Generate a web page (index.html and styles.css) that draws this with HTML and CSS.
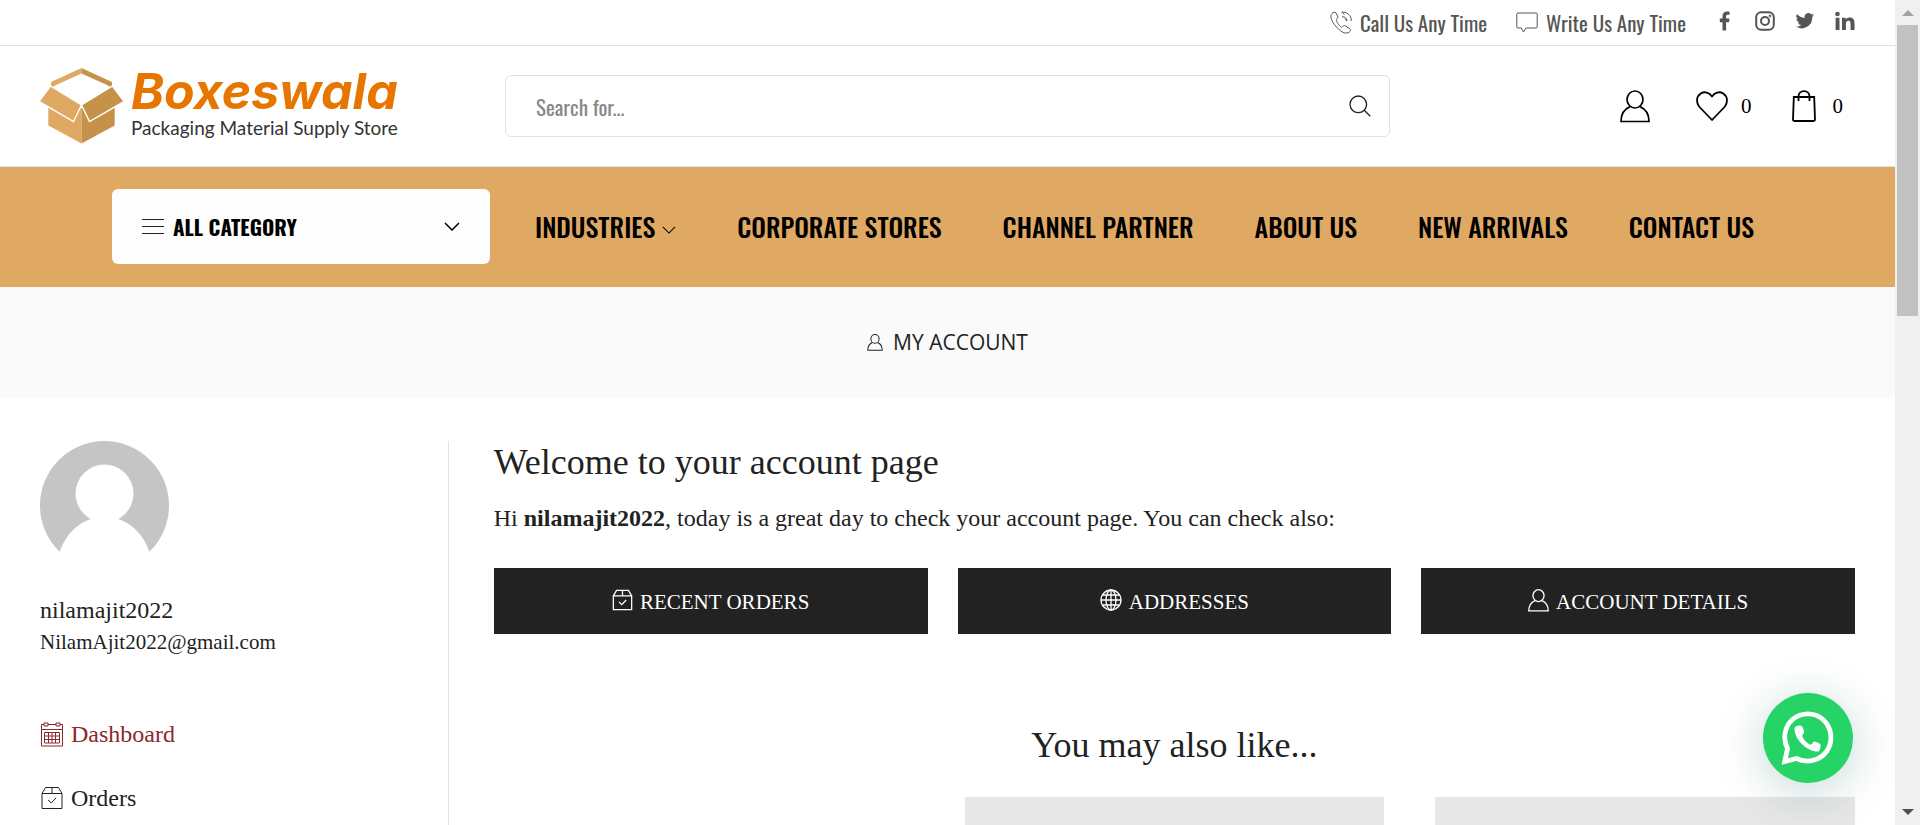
FILE: index.html
```html
<!DOCTYPE html>
<html lang="en">
<head>
<meta charset="utf-8">
<title>My account – Boxeswala</title>
<meta name="viewport" content="width=device-width, initial-scale=1">
<link rel="stylesheet" href="styles.css">
</head>
<body>
<svg class="sprite" aria-hidden="true">
  <symbol id="i-user" viewBox="0 0 30 33"><g fill="none" stroke="currentColor"><ellipse cx="15" cy="9.500" rx="8" ry="8.500"/><path d="M10 16.600C4.500 19 1 24.500 1 31.500H29C29 24.500 25.500 19 20 16.600"/></g></symbol>
  <symbol id="i-box" viewBox="0 0 22 24"><g fill="none" stroke="currentColor"><path d="M1 7.500H21V22.500H1ZM1 7.500L4.500 1.500H17.500L21 7.500M11 1.500V7.500M7.200 14L10.200 17L15 12"/></g></symbol>
  <symbol id="i-chevron" viewBox="0 0 16 9"><path d="M1 1L8 8L15 1" fill="none" stroke="currentColor"/></symbol>
</svg>
<div class="window">
  <div class="page">
    <div class="topbar">
      <a class="contact" href="#call"><svg class="ico-phone" viewBox="0 0 22 23" fill="none" stroke="currentColor"><path d="M2 2.500C3 1 5 .800 6 2L7.700 5.200C8.300 6.500 7.500 7.500 6.300 8.500C6 10 9 15 11.500 16.300C13 15 14.300 14.200 15.500 15L19.800 17.800C21 18.800 20.600 20 19.300 21C17.500 22.300 15.200 22.500 12.800 21.200C7.500 18.300 2.600 12.200 1.200 7.500C.600 5.400 1 3.800 2 2.500ZM11.500 1.200C16.500 .400 21.800 4.500 21.200 10M12 5.800C14.500 5.300 17 7.200 17 9.800M12 1.200L14.500 3.400M17 9.800L14.700 8"/></svg><span>Call Us Any Time</span></a>
      <a class="contact" href="#write"><svg class="ico-chat" viewBox="0 0 22 21" fill="none" stroke="currentColor"><path d="M2 1H20Q21.200 1 21.200 2.200V14.800Q21.200 16 20 16H10L7.500 20L5.200 16H2Q.800 16 .800 14.800V2.200Q.800 1 2 1Z"/></svg><span>Write Us Any Time</span></a>
      <nav class="social" aria-label="Social">
        <a href="#facebook" aria-label="Facebook"><svg width="20" height="20" viewBox="0 0 20 20" fill="currentColor"><path d="M7.500 19.500V11.200H4.800V7.600H7.500V5.100C7.500 2 9.300.500 12 .500C13.200.500 14.300.600 14.600.700V3.800H12.800C11.400 3.800 11.100 4.500 11.100 5.500V7.600H14.500L14 11.200H11.100V19.500Z"/></svg></a>
        <a href="#instagram" aria-label="Instagram"><svg width="20" height="20" viewBox="0 0 20 20" fill="none" stroke="currentColor" stroke-width="2"><rect x="1.200" y="1.200" width="17.600" height="17.600" rx="5"/><circle cx="10" cy="10" r="4"/><circle cx="15" cy="5" r=".400"/></svg></a>
        <a href="#twitter" aria-label="Twitter"><svg width="20" height="20" viewBox="0 0 24 24" fill="currentColor"><path d="M23 4.900c-.800.400-1.700.600-2.600.700.900-.600 1.600-1.500 2-2.500-.900.500-1.900.900-2.900 1.100A4.500 4.500 0 0 0 11.700 8.300C7.900 8.100 4.600 6.300 2.400 3.600a4.500 4.500 0 0 0 1.400 6.100c-.700 0-1.400-.200-2-.600a4.500 4.500 0 0 0 3.600 4.500c-.700.200-1.400.200-2 .100a4.500 4.500 0 0 0 4.200 3.100A9.100 9.100 0 0 1 1 18.700 12.800 12.800 0 0 0 20.700 7.200c.900-.600 1.700-1.400 2.300-2.300z"/></svg></a>
        <a href="#linkedin" aria-label="LinkedIn"><svg width="20" height="20" viewBox="0 0 20 20" fill="currentColor"><circle cx="2.500" cy="3" r="2.300"/><path d="M.600 6.800H4.500V19H.600ZM7 6.800H10.700V8.500C11.400 7.300 12.800 6.500 14.600 6.500C18.400 6.500 19.500 8.800 19.500 12.300V19H15.600V13C15.600 11.300 15.400 9.800 13.500 9.800C11.500 9.800 10.900 11.200 10.900 13V19H7Z"/></svg></a>
      </nav>
    </div>

    <header class="header">
      <a class="logo" href="#home">
        <svg class="logo-box" viewBox="0 0 83 76"><path fill="#e0a963" d="M8.300 34H41.500V75.500L8.300 57.500Z"/><path fill="#c6924a" d="M41.500 34H74.700V57.500L41.500 75.500Z"/><path fill="#fff" d="M41.500 5L73 19V26L41.500 40L10 26V19Z"/><path fill="#e0a963" d="M41.500 0V5.500L16 17L11 20V14Z"/><path fill="#c6924a" d="M41.500 0L72 14V20L67 17L41.500 5.500Z"/><path fill="#e0a963" stroke="#fff" stroke-width="1.400" d="M10.500 18L41.500 37L33.500 53.500L-1 33.500Z"/><path fill="#c6924a" stroke="#fff" stroke-width="1.400" d="M72.500 18L84 33.500L49.500 53.500L41.500 37Z"/></svg>
        <span class="logo-text"><span class="logo-name">Boxeswala</span><span class="logo-tag">Packaging Material Supply Store</span></span>
      </a>
      <form class="search" role="search">
        <input type="search" placeholder="Search for..." aria-label="Search for">
        <button type="button" aria-label="Search"><svg width="22" height="22" viewBox="0 0 22 22" fill="none" stroke="currentColor" stroke-width="1.300"><circle cx="9.300" cy="9.300" r="8.300"/><path d="M15.200 15.200L21.300 21.300"/></svg></button>
      </form>
      <div class="tools">
        <a href="#account" aria-label="Account"><svg class="ico-user" stroke-width="1.700"><use href="#i-user"/></svg></a>
        <a href="#wishlist" aria-label="Wishlist"><svg width="32" height="30" viewBox="0 0 32 30" fill="none" stroke="currentColor" stroke-width="1.800" stroke-linejoin="round"><path d="M16 5.500C13.500 1.500 8.500 0 4.800 2.500C.300 5.500 0 11 3 15.500L16 29L29 15.500C32 11 31.700 5.500 27.200 2.500C23.500 0 18.500 1.500 16 5.500Z"/></svg><span>0</span></a>
        <a href="#cart" aria-label="Cart"><svg width="28" height="32" viewBox="0 0 28 32" fill="none" stroke="currentColor" stroke-width="1.800"><path d="M1.800 7H22.200L23 29.500Q23 31 21.500 31H2.500Q1 31 1 29.500ZM6.500 11V6.500C6.500-.700 17.500-.700 17.500 6.500V11"/></svg><span>0</span></a>
      </div>
    </header>

    <div class="navbar">
      <button class="category" type="button"><svg width="22" height="16" viewBox="0 0 22 16" stroke="#222" stroke-width="1.200"><path d="M0 1.500H22M0 8.500H22M0 15.500H22"/></svg><span>ALL CATEGORY</span><svg class="ico-chevron" stroke-width="1.500"><use href="#i-chevron"/></svg></button>
      <nav class="menu" aria-label="Main">
        <a href="#industries">INDUSTRIES<svg class="ico-chevron-small" stroke-width="1.200"><use href="#i-chevron"/></svg></a>
        <a href="#corporate">CORPORATE STORES</a>
        <a href="#partner">CHANNEL PARTNER</a>
        <a href="#about">ABOUT US</a>
        <a href="#new">NEW ARRIVALS</a>
        <a href="#contact">CONTACT US</a>
      </nav>
    </div>

    <div class="banner"><svg class="ico-user-small" stroke-width="2"><use href="#i-user"/></svg><span>MY ACCOUNT</span></div>

    <div class="content">
      <aside class="sidebar">
        <svg class="avatar" viewBox="0 0 129 129" role="img" aria-label="Avatar"><circle cx="64.500" cy="64.500" r="64.500" fill="#c5c5c5"/><circle cx="64.500" cy="52.500" r="29" fill="#fff"/><path fill="#fff" d="M19.500 111C27 90 43 76 64.500 76S102 90 109.500 111L109 129H20Z"/></svg>
        <div class="user-name">nilamajit2022</div>
        <div class="user-mail">NilamAjit2022@gmail.com</div>
        <nav class="account-nav" aria-label="Account pages">
          <a class="active" href="#dashboard"><svg width="24" height="25" viewBox="0 0 24 25" fill="none" stroke="currentColor"><path d="M4 2.500H1.500V24H22.500V2.500H20M8 2.500H16M4 1H8V4H4ZM16 1H20V4H16ZM1.500 7.500H22.500M4.500 10.500H19.500V21H4.500ZM8.500 10.500V21M12 10.500V21M15.500 10.500V21M4.500 14H19.500M4.500 17.500H19.500"/></svg>Dashboard</a>
          <a href="#orders"><svg width="24" height="24"><use href="#i-box"/></svg>Orders</a>
        </nav>
      </aside>
      <main class="main">
        <h1>Welcome to your account page</h1>
        <p>Hi <strong>nilamajit2022</strong>, today is a great day to check your account page. You can check also:</p>
        <div class="actions">
          <a href="#orders"><svg width="21" height="22" stroke-width="1.400"><use href="#i-box"/></svg><span>RECENT ORDERS</span></a>
          <a href="#addresses"><svg width="22" height="22" viewBox="0 0 22 22" fill="none" stroke="currentColor" stroke-width="1.300"><circle cx="11" cy="11" r="10"/><ellipse cx="11" cy="11" rx="5" ry="10"/><path d="M11 1V21M1 11H21M2.800 6H19.200M2.800 16H19.200"/></svg><span>ADDRESSES</span></a>
          <a href="#details"><svg width="21" height="23" stroke-width="1.900"><use href="#i-user"/></svg><span>ACCOUNT DETAILS</span></a>
        </div>
        <h2>You may also like...</h2>
        <div class="products"><div></div><div class="product"></div><div class="product"></div></div>
      </main>
    </div>
  </div>
  <div class="scrollbar" aria-hidden="true"><span class="arrow up"></span><span class="thumb"></span><span class="arrow down"></span></div>
  <button class="whatsapp" type="button" aria-label="WhatsApp"><svg width="56" height="56" viewBox="0 0 56 56"><path fill="none" stroke="#fff" stroke-width="4.800" d="M7.500 38.500C2.500 28.500 4.500 16.500 12.500 9.500C21.500 2 34.500 2 43 9.500C52 17.500 53.500 31.500 46.500 41.500C39.500 51 27 53.500 16.500 48.500L4.700 51.500Z"/><path fill="#fff" d="M15 17C16.500 15.500 20.500 14.800 21.800 16C23 17.500 24.500 21 24 22.500C23.500 24 22 25 22.300 26.500C23.500 29.500 26.500 33 30.500 34.800C32 35 32.500 31.500 34.500 31.500C36.500 31.800 39.500 33.300 40.500 34.500C41 37 40 40.500 38.500 41.500C27.500 42 15.500 30.500 14.500 20C14.500 19 14.500 18 15 17Z"/></svg></button>
</div>
</body>
</html>
```
FILE: styles.css
```css
* { box-sizing: border-box; }
body {
  margin: 0;
  background: #fff;
  color: #222;
  font-family: "Liberation Serif", "Times New Roman", serif;
  font-size: 24px;
}
a { color: inherit; text-decoration: none; }
button, input { font: inherit; color: inherit; border: 0; background: none; padding: 0; }
svg { display: block; flex: none; }
.sprite { position: absolute; width: 0; height: 0; }
.window { display: flex; height: 100vh; overflow: hidden; }
.page { flex: 1; min-width: 0; overflow: hidden; }

.topbar, .menu, .category, .search input {
  font-family: Oswald, "Roboto Condensed", "Liberation Sans Narrow", sans-serif;
}
.topbar {
  display: flex;
  justify-content: flex-end;
  align-items: center;
  gap: 29px;
  height: 46px;
  padding: 0 40px;
  border-bottom: 1px solid #e1e1e1;
  color: #555;
  font-size: 21px;
}
.contact { display: flex; align-items: center; gap: 8px; }
.ico-phone { width: 22px; height: 23px; }
.ico-chat { width: 22px; height: 21px; }
.social { display: flex; gap: 20px; padding-bottom: 4px; }

.header {
  display: flex;
  align-items: center;
  height: 121px;
  padding: 0 52px 0 40px;
  border-bottom: 1px solid #e1e1e1;
}
.logo { display: flex; align-items: center; gap: 8px; width: 465px; }
.logo-box { width: 83px; height: 76px; }
.logo-text { display: flex; flex-direction: column; white-space: nowrap; }
.logo-name { font-family: Inter, sans-serif; font-size: 50px; line-height: 44px; font-weight: 700; font-style: italic; color: #e77600; }
.logo-tag { font-family: Lato, sans-serif; font-size: 19px; line-height: 30px; color: #333; }
.search {
  display: flex;
  align-items: center;
  flex: 0 1 885px;
  height: 62px;
  padding: 0 18px 0 30px;
  border: 1px solid #e1e1e1;
  border-radius: 6px;
}
.search input { flex: 1; min-width: 0; outline: 0; font-size: 21px; }
.search input::placeholder { color: #888; opacity: 1; }
.tools { display: flex; align-items: center; gap: 40px; margin-left: auto; color: #000; font-size: 21px; }
.tools a { display: flex; align-items: center; gap: 13px; }
.ico-user { width: 30px; height: 33px; margin-right: 6px; }

.navbar {
  display: flex;
  align-items: center;
  height: 120px;
  padding: 0 112px 2px;
  background: #e0a963;
  color: #000;
}
.category {
  display: flex;
  align-items: center;
  gap: 9px;
  flex: 0 0 378px;
  height: 75px;
  padding: 0 30px;
  border-radius: 6px;
  background: #fdfdfd;
  font-size: 21px;
  font-weight: 700;
}
.ico-chevron { width: 16px; height: 9px; margin-left: auto; }
.ico-chevron-small { width: 14px; height: 8px; margin-top: 8px; }
.menu { display: flex; gap: 61px; margin-left: 45px; font-size: 26px; font-weight: 500; white-space: nowrap; }
.menu a { display: flex; align-items: center; gap: 7px; }

.banner {
  display: flex;
  align-items: center;
  justify-content: center;
  gap: 10px;
  height: 110px;
  background: #fafafa;
  font-family: "Open Sans", sans-serif;
  font-size: 21px;
}
.ico-user-small { width: 16px; height: 17px; }

.content { display: flex; padding: 44px 40px 0; }
.sidebar { flex: 0 0 calc(25% - 45px); border-right: 1px solid #e1e1e1; min-height: 800px; }
.avatar { width: 129px; height: 129px; }
.user-name { margin-top: 23px; line-height: 34px; }
.user-mail { font-size: 21px; line-height: 30px; }
.account-nav { margin-top: 45px; }
.account-nav a { display: flex; align-items: center; gap: 7px; height: 64px; }
.account-nav .active { color: #8a2a2b; }

.main { flex: 1; min-width: 0; padding-left: 45px; }
h1, h2 { margin: 0; font-size: 36px; line-height: 42px; font-weight: 400; }
h2 { margin-top: 90px; text-align: center; }
p { margin: 17px 0 32px; line-height: 36px; }
.actions { display: grid; grid-template-columns: repeat(3, 1fr); gap: 30px; }
.actions a {
  display: flex;
  align-items: center;
  justify-content: center;
  gap: 7px;
  height: 66px;
  background: #222;
  color: #fff;
  font-size: 21px;
}
.actions span { padding-top: 2px; }
.actions svg { margin-bottom: 2px; }
.products { display: grid; grid-template-columns: repeat(3, 1fr); gap: 51px; margin-top: 31px; }
.product { height: 420px; background: #e7e7e7; }

.scrollbar { display: flex; flex-direction: column; align-items: center; width: 25px; padding: 10px 0; background: #f0f0f0; }
.thumb { width: 21px; height: 291px; margin-top: 9px; background: #c1c1c1; }
.arrow { border: 6px solid transparent; }
.up { border-top: 0; border-bottom-color: #a3a3a3; }
.down { margin-top: auto; border-bottom: 0; border-top-color: #505050; }
.whatsapp {
  position: absolute;
  right: 67px;
  bottom: 42px;
  display: grid;
  place-items: center;
  width: 90px;
  height: 90px;
  border-radius: 50%;
  background: #25d366;
  box-shadow: 0 8px 48px rgba(7, 94, 84, .24);
}
```
